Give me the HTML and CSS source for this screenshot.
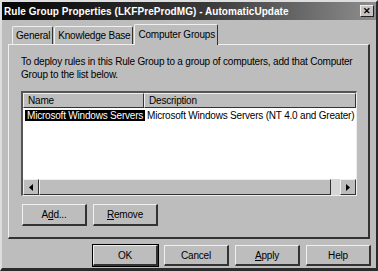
FILE: index.html
```html
<!DOCTYPE html>
<html lang="en">
<head>
  <meta charset="UTF-8">
  <title>Rule Group Properties</title>
  <link rel="stylesheet" href="styles.css">
</head>
<body>
  <div class="window">
    <div class="titlebar">
      <span class="title">Rule Group Properties (LKFPreProdMG) - AutomaticUpdate</span>
      <span class="close">&#x2715;</span>
    </div>

    <div class="tabs">
      <span class="tab">General</span>
      <span class="tab">Knowledge Base</span>
      <span class="tab tab--active">Computer Groups</span>
    </div>

    <div class="panel">
      <p class="intro">To deploy rules in this Rule Group to a group of computers, add that Computer Group to the list below.</p>

      <div class="list">
        <div class="list-head">
          <span class="col col-name">Name</span>
          <span class="col col-desc">Description</span>
        </div>
        <div class="list-body">
          <div class="row">
            <span class="cell cell-name"><span class="selected">Microsoft Windows Servers</span></span>
            <span class="cell">Microsoft Windows Servers (NT 4.0 and Greater)</span>
          </div>
        </div>
        <div class="hscroll">
          <span class="arrow"><svg width="4" height="7" viewBox="0 0 4 7"><path d="M4 0 L0 3.5 L4 7 Z" fill="#000"/></svg></span>
          <span class="thumb"></span>
          <span class="track"></span>
          <span class="arrow"><svg width="4" height="7" viewBox="0 0 4 7"><path d="M0 0 L4 3.5 L0 7 Z" fill="#000"/></svg></span>
        </div>
      </div>

      <div class="panel-buttons">
        <button class="btn">A<u>d</u>d...</button>
        <button class="btn"><u>R</u>emove</button>
      </div>
    </div>

    <div class="footer">
      <button class="btn btn--default">OK</button>
      <button class="btn">Cancel</button>
      <button class="btn"><u>A</u>pply</button>
      <button class="btn">Help</button>
    </div>
  </div>
</body>
</html>
```

FILE: styles.css
```css
* {
  box-sizing: border-box;
}

body {
  margin: 0;
  font-family: "Liberation Sans", Arial, sans-serif;
  font-size: 10px;
  letter-spacing: -0.2px;
  color: #000;
  background: #bdbdbd;
}

.window {
  width: 378px;
  height: 271px;
  background: #bdbdbd;
  border-top: 2px solid #dedede;
  border-left: 2px solid #dedede;
  border-right: 2px solid #2a2a2a;
  border-bottom: 3px solid #2a2a2a;
  display: flex;
  flex-direction: column;
}

.titlebar {
  height: 18px;
  display: flex;
  align-items: center;
  justify-content: space-between;
  padding: 0 2px 0 2px;
  background: linear-gradient(to right, #050505, #3a3a3a 55%, #8e8e8e);
}

.title {
  color: #fff;
  font-weight: bold;
  font-size: 10px;
  letter-spacing: 0.05px;
}

.close {
  width: 14px;
  height: 12px;
  background: #c4c4c4;
  border-top: 1px solid #efefef;
  border-left: 1px solid #efefef;
  border-right: 1px solid #222;
  border-bottom: 1px solid #222;
  font-size: 9px;
  font-weight: bold;
  line-height: 10px;
  text-align: center;
}

.tabs {
  display: flex;
  align-items: flex-end;
  height: 22px;
  margin-top: 2px;
  padding-left: 10px;
}

.tab {
  height: 18px;
  padding: 3px 2px 0 3px;
  border-top: 1px solid #efefef;
  border-left: 1px solid #efefef;
  border-right: 1px solid #333;
  border-top-left-radius: 2px;
  border-top-right-radius: 2px;
  margin-right: 1px;
  white-space: nowrap;
}

.tab--active {
  height: 21px;
  padding-top: 4px;
  margin-bottom: -1px;
  background: #bdbdbd;
  position: relative;
  z-index: 1;
}

.panel {
  margin: 0 6px 0 6px;
  height: 195px;
  border-top: 1px solid #efefef;
  border-left: 1px solid #efefef;
  border-right: 2px solid #333;
  border-bottom: 2px solid #333;
  padding: 10px 11px 0 12px;
}

.intro {
  margin: 0;
  line-height: 13px;
}

.list {
  margin-top: 10px;
  height: 105px;
  border-top: 2px solid #555;
  border-left: 2px solid #555;
  border-right: 1px solid #eee;
  border-bottom: 1px solid #eee;
  background: #fff;
  display: flex;
  flex-direction: column;
}

.list-head {
  display: flex;
  height: 15px;
  background: #bdbdbd;
}

.col {
  line-height: 13px;
  padding-left: 4px;
  border-top: 1px solid #efefef;
  border-left: 1px solid #efefef;
  border-right: 1px solid #333;
  border-bottom: 1px solid #333;
}

.col-name {
  width: 121px;
}

.col-desc {
  flex: 1;
}

.list-body {
  flex: 1;
}

.row {
  display: flex;
  height: 13px;
  line-height: 13px;
  margin-top: 1px;
}

.cell {
  white-space: nowrap;
}

.cell-name {
  width: 121px;
  padding-left: 2px;
}

.selected {
  background: #000;
  color: #fff;
  padding: 0 2px;
}

.cell + .cell {
  padding-left: 3px;
}

.hscroll {
  display: flex;
  height: 16px;
  background: #d6d6d6;
}

.arrow,
.thumb {
  background: #bdbdbd;
  border-top: 1px solid #efefef;
  border-left: 1px solid #efefef;
  border-right: 1px solid #333;
  border-bottom: 1px solid #333;
}

.arrow {
  width: 16px;
  display: flex;
  align-items: center;
  justify-content: center;
}

.thumb {
  flex: 1;
}

.track {
  width: 9px;
}

.panel-buttons {
  display: flex;
  gap: 6px;
  margin-top: 8px;
  padding-left: 1px;
}

.btn {
  width: 65px;
  height: 22px;
  font-family: "Liberation Sans", Arial, sans-serif;
  font-size: 10px;
  letter-spacing: -0.2px;
  color: #000;
  background: #bdbdbd;
  border-top: 1px solid #efefef;
  border-left: 1px solid #efefef;
  border-right: 2px solid #333;
  border-bottom: 2px solid #333;
  padding: 0;
}

.btn--default {
  outline: 1px solid #000;
}

.footer {
  display: flex;
  justify-content: flex-end;
  gap: 6px;
  margin-top: 6px;
  padding-right: 5px;
}

.footer .btn {
  height: 21px;
}
```
